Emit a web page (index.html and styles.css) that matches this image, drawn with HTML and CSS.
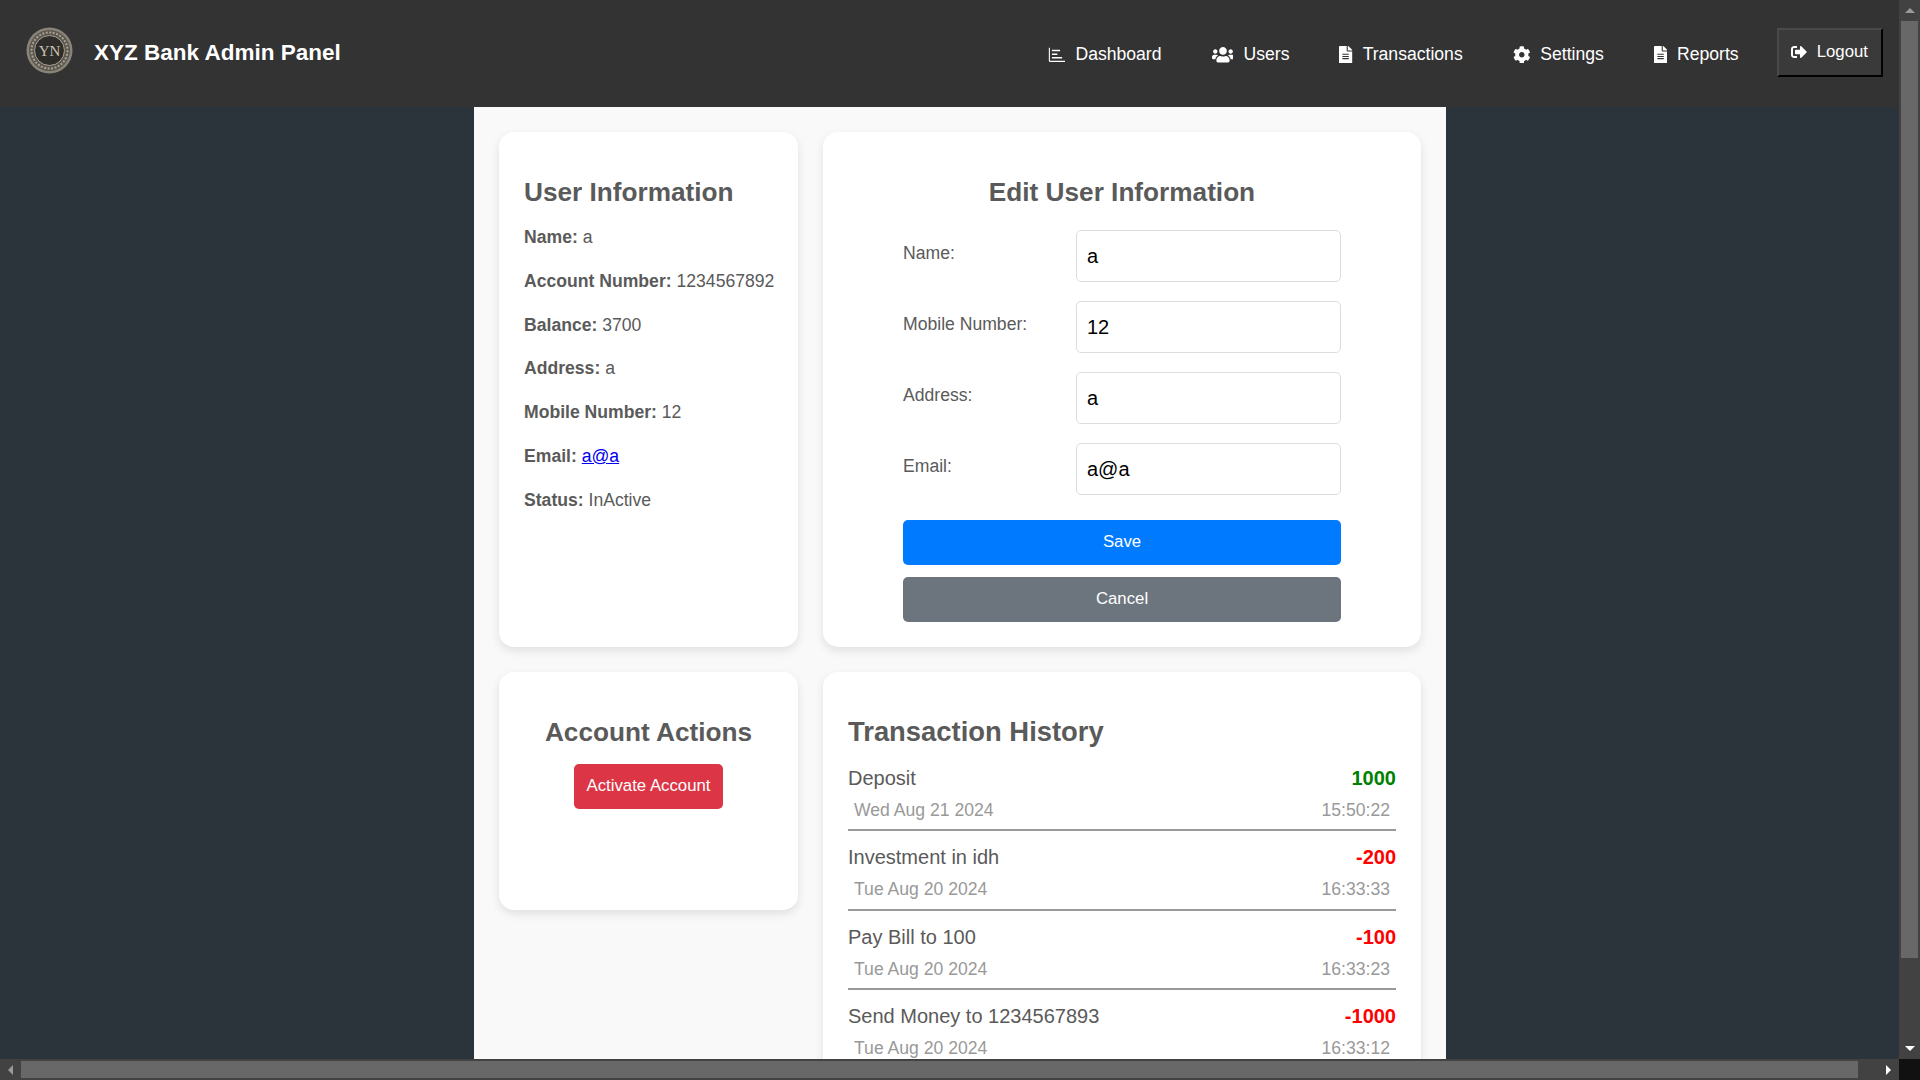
FILE: index.html
```html
<!DOCTYPE html>
<html lang="en">
<head>
    <meta charset="UTF-8">
    <meta name="viewport" content="width=device-width, initial-scale=1.0">
    <title>XYZ Bank Admin Panel</title>
    <link rel="stylesheet" href="styles.css">
</head>
<body>
    <div class="window">
        <div class="viewport">
            <div class="page">
                <header class="topbar">
                    <div class="brand">
                        <svg class="logo" viewBox="0 0 47 47">
                            <circle cx="23.5" cy="23.5" r="23" fill="#8a8478"/>
                            <circle cx="23.5" cy="23.5" r="20.5" fill="#5c574e"/>
                            <circle cx="23.5" cy="23.5" r="18" fill="none" stroke="#a9a295" stroke-width="2" stroke-dasharray="2 1.5"/>
                            <circle cx="23.5" cy="23.5" r="15" fill="#2f2d2a" stroke="#a8a193" stroke-width="1"/>
                            <text x="23.5" y="29" class="logo-mark">YN</text>
                        </svg>
                        <span class="brand-name">XYZ Bank Admin Panel</span>
                    </div>
                    <nav class="nav">
                        <a class="nav-link" href="#">
                            <svg class="icon" viewBox="0 0 512 512"><path d="M24 48h32v384h440v32H56a32 32 0 0 1-32-32z"/><rect x="112" y="112" width="240" height="44" rx="10"/><rect x="112" y="216" width="164" height="44" rx="10"/><rect x="112" y="320" width="300" height="44" rx="10"/></svg>
                            Dashboard
                        </a>
                        <a class="nav-link" href="#">
                            <svg class="icon" viewBox="0 0 640 512"><path d="M96 224c35.3 0 64-28.7 64-64s-28.7-64-64-64-64 28.7-64 64 28.7 64 64 64zm448 0c35.3 0 64-28.7 64-64s-28.7-64-64-64-64 28.7-64 64 28.7 64 64 64zm32 32h-64c-17.6 0-33.5 7.1-45.1 18.6 40.3 22.1 68.9 62 75.1 109.4h66c17.7 0 32-14.3 32-32v-32c0-35.3-28.7-64-64-64zm-256 0c61.9 0 112-50.1 112-112S381.9 32 320 32 208 82.1 208 144s50.1 112 112 112zm76.8 32h-8.3c-20.8 10-43.9 16-68.5 16s-47.6-6-68.5-16h-8.3C179.6 288 128 339.6 128 403.2V432c0 26.5 21.5 48 48 48h288c26.5 0 48-21.5 48-48v-28.8c0-63.6-51.6-115.2-115.2-115.2zm-223.7-13.4C161.5 263.1 145.6 256 128 256H64c-35.3 0-64 28.7-64 64v32c0 17.7 14.3 32 32 32h65.9c6.3-47.4 34.9-87.3 75.2-109.4z"/></svg>
                            Users
                        </a>
                        <a class="nav-link" href="#">
                            <svg class="icon" viewBox="0 0 384 512"><path d="M224 136V0H24C10.7 0 0 10.7 0 24v464c0 13.3 10.7 24 24 24h336c13.3 0 24-10.7 24-24V160H248c-13.2 0-24-10.8-24-24zm64 236c0 6.6-5.4 12-12 12H108c-6.6 0-12-5.4-12-12v-8c0-6.6 5.4-12 12-12h168c6.6 0 12 5.4 12 12v8zm0-64c0 6.6-5.4 12-12 12H108c-6.6 0-12-5.4-12-12v-8c0-6.6 5.4-12 12-12h168c6.6 0 12 5.4 12 12v8zm0-72v8c0 6.6-5.4 12-12 12H108c-6.6 0-12-5.4-12-12v-8c0-6.6 5.4-12 12-12h168c6.6 0 12 5.4 12 12zm96-114.1v6.1H256V0h6.1c6.4 0 12.5 2.5 17 7l97.9 98c4.5 4.5 7 10.6 7 16.9z"/></svg>
                            Transactions
                        </a>
                        <a class="nav-link" href="#">
                            <svg class="icon" viewBox="0 0 512 512"><path d="M487.4 315.7l-42.6-24.6c4.3-23.2 4.3-47 0-70.2l42.6-24.6c4.9-2.8 7.1-8.6 5.5-14-11.1-35.6-30-67.8-54.7-94.6-3.8-4.1-10-5.1-14.8-2.3L380.8 110c-17.9-15.4-38.5-27.3-60.8-35.1V25.8c0-5.6-3.9-10.5-9.4-11.7-36.7-8.2-74.3-7.8-109.2 0-5.5 1.2-9.4 6.1-9.4 11.7V75c-22.2 7.9-42.8 19.8-60.8 35.1L88.7 85.5c-4.9-2.8-11-1.9-14.8 2.3-24.7 26.7-43.6 58.9-54.7 94.6-1.7 5.4.6 11.2 5.5 14L67.3 221c-4.3 23.2-4.3 47 0 70.2l-42.6 24.6c-4.9 2.8-7.1 8.6-5.5 14 11.1 35.6 30 67.8 54.7 94.6 3.8 4.1 10 5.1 14.8 2.3l42.6-24.6c17.9 15.4 38.5 27.3 60.8 35.1v49.2c0 5.6 3.9 10.5 9.4 11.7 36.7 8.2 74.3 7.8 109.2 0 5.5-1.2 9.4-6.1 9.4-11.7v-49.2c22.2-7.9 42.8-19.8 60.8-35.1l42.6 24.6c4.9 2.8 11 1.9 14.8-2.3 24.7-26.7 43.6-58.9 54.7-94.6 1.5-5.5-.7-11.3-5.6-14.1zM256 336c-44.1 0-80-35.9-80-80s35.9-80 80-80 80 35.9 80 80-35.9 80-80 80z"/></svg>
                            Settings
                        </a>
                        <a class="nav-link" href="#">
                            <svg class="icon" viewBox="0 0 384 512"><path d="M224 136V0H24C10.7 0 0 10.7 0 24v464c0 13.3 10.7 24 24 24h336c13.3 0 24-10.7 24-24V160H248c-13.2 0-24-10.8-24-24zm64 236c0 6.6-5.4 12-12 12H108c-6.6 0-12-5.4-12-12v-8c0-6.6 5.4-12 12-12h168c6.6 0 12 5.4 12 12v8zm0-64c0 6.6-5.4 12-12 12H108c-6.6 0-12-5.4-12-12v-8c0-6.6 5.4-12 12-12h168c6.6 0 12 5.4 12 12v8zm0-72v8c0 6.6-5.4 12-12 12H108c-6.6 0-12-5.4-12-12v-8c0-6.6 5.4-12 12-12h168c6.6 0 12 5.4 12 12zm96-114.1v6.1H256V0h6.1c6.4 0 12.5 2.5 17 7l97.9 98c4.5 4.5 7 10.6 7 16.9z"/></svg>
                            Reports
                        </a>
                        <button class="logout-btn">
                            <svg class="icon" viewBox="0 0 512 512"><path d="M497 273L329 441c-15 15-41 4.5-41-17v-96H152c-13.3 0-24-10.7-24-24v-96c0-13.3 10.7-24 24-24h136V88c0-21.4 25.9-32 41-17l168 168c9.3 9.4 9.3 24.6 0 34zM192 436v-40c0-6.6-5.4-12-12-12H96c-17.7 0-32-14.3-32-32V160c0-17.7 14.3-32 32-32h84c6.6 0 12-5.4 12-12V76c0-6.6-5.4-12-12-12H96c-53 0-96 43-96 96v192c0 53 43 96 96 96h84c6.6 0 12-5.4 12-12z"/></svg>
                            Logout
                        </button>
                    </nav>
                </header>

                <main class="content">
                    <section class="card">
                        <h2 class="card-title info-title">User Information</h2>
                        <p class="info-row"><strong>Name:</strong> a</p>
                        <p class="info-row"><strong>Account Number:</strong> 1234567892</p>
                        <p class="info-row"><strong>Balance:</strong> 3700</p>
                        <p class="info-row"><strong>Address:</strong> a</p>
                        <p class="info-row"><strong>Mobile Number:</strong> 12</p>
                        <p class="info-row"><strong>Email:</strong> <a href="#">a@a</a></p>
                        <p class="info-row"><strong>Status:</strong> InActive</p>
                    </section>

                    <section class="card">
                        <h2 class="card-title centered">Edit User Information</h2>
                        <form class="edit-form">
                            <div class="form-row">
                                <label for="name">Name:</label>
                                <input type="text" id="name" value="a">
                            </div>
                            <div class="form-row">
                                <label for="mobile">Mobile Number:</label>
                                <input type="text" id="mobile" value="12">
                            </div>
                            <div class="form-row">
                                <label for="address">Address:</label>
                                <input type="text" id="address" value="a">
                            </div>
                            <div class="form-row">
                                <label for="email">Email:</label>
                                <input type="text" id="email" value="a@a">
                            </div>
                            <button type="button" class="btn btn-save">Save</button>
                            <button type="button" class="btn btn-cancel">Cancel</button>
                        </form>
                    </section>

                    <section class="card actions-card">
                        <h2 class="card-title centered">Account Actions</h2>
                        <button class="btn btn-danger">Activate Account</button>
                    </section>

                    <section class="card">
                        <h2 class="card-title history-title">Transaction History</h2>
                        <div class="txn">
                            <div class="txn-main"><span>Deposit</span><span class="amount plus">1000</span></div>
                            <div class="txn-meta"><span>Wed Aug 21 2024</span><span>15:50:22</span></div>
                        </div>
                        <div class="txn">
                            <div class="txn-main"><span>Investment in idh</span><span class="amount minus">-200</span></div>
                            <div class="txn-meta"><span>Tue Aug 20 2024</span><span>16:33:33</span></div>
                        </div>
                        <div class="txn">
                            <div class="txn-main"><span>Pay Bill to 100</span><span class="amount minus">-100</span></div>
                            <div class="txn-meta"><span>Tue Aug 20 2024</span><span>16:33:23</span></div>
                        </div>
                        <div class="txn">
                            <div class="txn-main"><span>Send Money to 1234567893</span><span class="amount minus">-1000</span></div>
                            <div class="txn-meta"><span>Tue Aug 20 2024</span><span>16:33:12</span></div>
                        </div>
                    </section>
                </main>
            </div>
        </div>

        <div class="vbar">
            <span class="arrow arrow-up"></span>
            <div class="vthumb"></div>
            <span class="arrow arrow-down"></span>
        </div>
        <div class="hbar">
            <span class="arrow arrow-left"></span>
            <div class="hthumb"></div>
            <span class="arrow arrow-right"></span>
        </div>
        <div class="corner"></div>
    </div>
</body>
</html>
```

FILE: styles.css
```css
* {
    box-sizing: border-box;
}

body {
    margin: 0;
    font-family: "Liberation Sans", Arial, sans-serif;
    color: #5a5a5a;
    background: #2c343b;
}

/* window with the two scrollbars */
.window {
    display: grid;
    grid-template-columns: 1899px 21px;
    grid-template-rows: 1059px 21px;
    width: 1920px;
    height: 1080px;
    overflow: hidden;
}

.viewport {
    overflow: hidden;
}

.page {
    width: 1920px;
}

.vbar, .hbar {
    display: flex;
    align-items: center;
    background: #424242;
}

.vbar {
    flex-direction: column;
}

.vthumb {
    width: 17px;
    height: 937px;
    margin-bottom: auto;
    background: #686868;
}

.hthumb {
    width: 1837px;
    height: 17px;
    margin-right: auto;
    background: #686868;
}

.corner {
    background: #111;
}

.arrow {
    display: flex;
    flex: none;
    align-items: center;
    justify-content: center;
    width: 21px;
    height: 21px;
}

.arrow::before {
    content: "";
    border: 5px solid transparent;
}

.arrow-up::before {
    border-top: 0;
    border-bottom-color: #9a9a9a;
}

.arrow-down::before {
    border-bottom: 0;
    border-top-color: #fff;
}

.arrow-left::before {
    border-left: 0;
    border-right-color: #9a9a9a;
}

.arrow-right::before {
    border-right: 0;
    border-left-color: #fff;
}

/* top bar */
.topbar {
    display: flex;
    justify-content: space-between;
    align-items: center;
    height: 107px;
    padding: 0 37px 0 26px;
    background: #333;
    color: #fff;
}

.brand {
    display: flex;
    align-items: center;
    gap: 21px;
    margin-top: -6px;
}

.logo {
    width: 47px;
    height: 47px;
}

.logo-mark {
    font-family: "Liberation Serif", serif;
    font-size: 15px;
    text-anchor: middle;
    fill: #c9c3b6;
}

.brand-name {
    margin-top: 5px;
    font-size: 22.5px;
    font-weight: bold;
}

.nav {
    display: flex;
    align-items: center;
    gap: 50px;
}

.nav-link {
    display: flex;
    align-items: center;
    gap: 10px;
    padding-top: 2px;
    color: #fff;
    text-decoration: none;
    font-size: 17.6px;
}

.icon {
    height: 17.6px;
    fill: currentColor;
}

.logout-btn {
    display: flex;
    align-items: center;
    gap: 10px;
    height: 49px;
    margin-left: -12px;
    margin-top: -3px;
    padding: 0 13px 0 12px;
    border: 2px outset #555;
    border-color: #4a4a4a #000 #000 #4a4a4a;
    background: #3a3a3a;
    color: #fff;
    font-family: inherit;
    font-size: 16.8px;
}

.logout-btn .icon {
    height: 16px;
}

/* main column */
.content {
    display: grid;
    grid-template-columns: 299px 598px;
    grid-template-rows: 515px auto;
    gap: 25px;
    width: 972px;
    margin: 0 auto;
    padding: 25px;
    background: #f9f9f9;
}

.card {
    padding: 25px;
    border-radius: 15px;
    background: #fff;
    box-shadow: 0 4px 10px rgba(0, 0, 0, 0.1);
}

.card-title {
    margin: 20px 0 14px;
    font-size: 26.2px;
    font-weight: bold;
    line-height: 30px;
}

.info-title {
    margin-bottom: 20px;
}

.history-title {
    margin-bottom: 5px;
    font-size: 27.4px;
}

.centered {
    text-align: center;
}

.info-row {
    margin: 0 0 23.4px;
    font-size: 17.6px;
    line-height: 20.4px;
    white-space: nowrap;
}

.info-row a {
    color: #00e;
}

/* edit form */
.edit-form {
    display: flex;
    flex-direction: column;
    width: 438px;
    margin: 23px auto 0;
}

.form-row {
    display: grid;
    grid-template-columns: 173px 265px;
    height: 52px;
    margin-bottom: 19px;
}

.form-row label {
    padding-top: 13px;
    font-size: 17.6px;
}

.form-row input {
    height: 52px;
    padding: 0 10px;
    border: 1px solid #ddd;
    border-radius: 5px;
    color: #000;
    font-family: inherit;
    font-size: 20px;
}

.btn {
    height: 45px;
    padding: 0 0 2px;
    border: none;
    border-radius: 5px;
    color: #fff;
    font-family: inherit;
    font-size: 16.8px;
}

.btn-save {
    margin-top: 6px;
    background: #007bff;
}

.btn-cancel {
    margin-top: 12px;
    padding-bottom: 1px;
    background: #6c757d;
}

.actions-card {
    display: flex;
    flex-direction: column;
    align-items: center;
    align-self: start;
    height: 238px;
}

.btn-danger {
    width: 149px;
    margin-top: 3px;
    background: #dc3545;
}

/* transactions */
.txn {
    height: 79.4px;
    padding-top: 11px;
    border-bottom: 2px solid #999;
}

.txn-main, .txn-meta {
    display: flex;
    justify-content: space-between;
}

.txn-main {
    font-size: 20px;
    line-height: 30px;
}

.txn-meta {
    padding: 0 6px;
    margin-top: 4px;
    color: #999;
    font-size: 17.6px;
    line-height: 26px;
}

.amount {
    font-weight: bold;
}

.plus {
    color: #008000;
}

.minus {
    color: #f00;
}
```
